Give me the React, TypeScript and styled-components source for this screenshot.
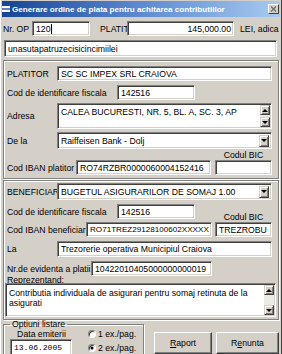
import React from 'react'
import styled, { createGlobalStyle } from 'styled-components'

const GlobalStyle = createGlobalStyle`
  html, body {
    margin: 0;
    padding: 0;
    background: #d4d0c8;
    overflow: hidden;
  }
  * {
    box-sizing: border-box;
  }
`

const Window = styled.div`
  width: 282px;
  height: 362px;
  display: flex;
  flex-direction: column;
  padding: 1px;
  background: #d4d0c8;
  border-left: 1px solid #ffffff;
  border-right: 1px solid #404040;
  font-family: "Liberation Sans", Arial, sans-serif;
  font-size: 8.7px;
  color: #000;
  overflow: hidden;
`

const TitleBar = styled.div`
  height: 16px;
  flex: none;
  display: flex;
  align-items: center;
  padding: 0 1px 0 0;
  background: linear-gradient(90deg, #164496 0%, #5d8ad0 50%, #a6caf0 100%);
  color: #fff;
  font-weight: bold;
  font-size: 8.1px;
`

const TitleText = styled.span`
  flex: 1;
  margin-left: 1px;
  white-space: nowrap;
  overflow: hidden;
`

const CloseBtn = styled.div`
  width: 11px;
  height: 10px;
  flex: none;
  display: flex;
  align-items: center;
  justify-content: center;
  background: #d4d0c8;
  border: 1px solid;
  border-color: #ffffff #404040 #404040 #ffffff;
`

const Content = styled.div`
  display: flex;
  flex-direction: column;
  padding: 4px 1px 0;
`

const Row = styled.div<{ $h: number; $mt?: number; $pad?: boolean }>`
  display: flex;
  align-items: center;
  flex: none;
  height: ${p => p.$h}px;
  margin-top: ${p => p.$mt ?? 0}px;
  padding: ${p => (p.$pad ? '0 6px 0 3px' : '0')};
`

const Label = styled.span<{ $w?: number; $pl?: number }>`
  flex: none;
  width: ${p => (p.$w ? `${p.$w}px` : 'auto')};
  padding-left: ${p => p.$pl ?? 0}px;
  white-space: nowrap;
`

const Field = styled.div<{ $w?: number; $right?: boolean; $mono?: boolean; $ml?: number; $mr?: number; $fs?: number }>`
  height: 100%;
  width: ${p => (p.$w ? `${p.$w}px` : 'auto')};
  flex: ${p => (p.$w ? 'none' : '1')};
  margin-left: ${p => p.$ml ?? 0}px;
  margin-right: ${p => p.$mr ?? 0}px;
  display: flex;
  align-items: center;
  justify-content: ${p => (p.$right ? 'flex-end' : 'flex-start')};
  padding: 0 ${p => (p.$right ? 2 : 3)}px;
  background: #ffffff;
  border: 1px solid;
  border-color: #808080 #ffffff #ffffff #808080;
  box-shadow: inset 1px 1px 0 #404040, inset -1px -1px 0 #d4d0c8;
  font-family: ${p => (p.$mono ? '"Liberation Mono", "Courier New", monospace' : 'inherit')};
  font-size: ${p => (p.$mono ? '8px' : p.$fs ? `${p.$fs}px` : 'inherit')};
  white-space: nowrap;
  overflow: hidden;
`

const Caret = styled.span`
  width: 1px;
  height: 10px;
  background: #000;
`

const Combo = styled(Field)`
  padding-right: 2px;
`

const ComboText = styled.span`
  flex: 1;
  overflow: hidden;
`

const ArrowBtn = styled.div<{ $h?: number }>`
  width: 10px;
  height: ${p => p.$h ?? 12}px;
  flex: none;
  display: flex;
  align-items: center;
  justify-content: center;
  background: #d4d0c8;
  border: 1px solid;
  border-color: #d4d0c8 #404040 #404040 #d4d0c8;
  box-shadow: inset 1px 1px 0 #ffffff, inset -1px -1px 0 #808080;
`

const Arrow = styled.span<{ $up?: boolean }>`
  width: 0;
  height: 0;
  border-left: 3px solid transparent;
  border-right: 3px solid transparent;
  border-top: ${p => (p.$up ? '0' : '3px solid #000')};
  border-bottom: ${p => (p.$up ? '3px solid #000' : '0')};
`

const Memo = styled.div<{ $h: number }>`
  flex: 1;
  height: ${p => p.$h}px;
  display: flex;
  background: #ffffff;
  border: 1px solid;
  border-color: #808080 #ffffff #ffffff #808080;
  box-shadow: inset 1px 1px 0 #404040, inset -1px -1px 0 #d4d0c8;
  padding: 1px;
`

const MemoText = styled.div<{ $pt?: number }>`
  flex: 1;
  padding: ${p => p.$pt ?? 2}px 3px 0 2px;
  line-height: 10px;
  overflow: hidden;
`

const ScrollBar = styled.div`
  width: 10px;
  flex: none;
  display: flex;
  flex-direction: column;
  justify-content: space-between;
  background: #ecebe6;
`

const Panel = styled.div<{ $pt: number; $pb: number; $mt: number }>`
  display: flex;
  flex-direction: column;
  margin-top: ${p => p.$mt}px;
  padding: ${p => p.$pt}px 0 ${p => p.$pb}px;
  border: 1px solid #808080;
  box-shadow: inset 1px 1px 0 #ffffff, 1px 1px 0 #ffffff;
`

const BicLabel = styled.span<{ $self?: boolean }>`
  width: 57px;
  margin-left: auto;
  text-align: center;
  line-height: 10px;
  align-self: ${p => (p.$self ? 'flex-end' : 'auto')};
  margin-bottom: ${p => (p.$self ? '-3px' : '0')};
`

const MemoWrap = styled.div`
  display: flex;
  padding: 0 2px 0 1px;
`

const BottomRow = styled.div`
  display: flex;
  align-items: flex-start;
  margin-top: -1px;
`

const Group = styled.fieldset`
  width: 141px;
  height: 48px;
  margin: 0;
  padding: 0 0 0 6px;
  border: 1px solid #808080;
  box-shadow: inset 1px 1px 0 #ffffff, 1px 1px 0 #ffffff;
  display: flex;
`

const Legend = styled.legend`
  padding: 0 2px;
  margin-left: 0;
  line-height: 10px;
`

const DateCol = styled.div`
  width: 62px;
  display: flex;
  flex-direction: column;
  align-items: stretch;
`

const DateLabel = styled.div`
  height: 10px;
  line-height: 10px;
  text-align: center;
  padding-left: 1px;
`

const DateField = styled(Field)`
  height: 17px;
  flex: none;
`

const RadioCol = styled.div`
  display: flex;
  flex-direction: column;
  margin-left: 16px;
  margin-top: -2px;
`

const RadioRow = styled.label`
  display: flex;
  align-items: center;
  height: 14px;
  gap: 2px;
`

const RadioDot = styled.span`
  width: 8px;
  height: 8px;
  border-radius: 50%;
  background: #ffffff;
  border: 1px solid;
  border-color: #808080 #ffffff #ffffff #808080;
  box-shadow: inset 1px 1px 0 #404040;
  display: flex;
  align-items: center;
  justify-content: center;
`

const RadioMark = styled.span`
  width: 2px;
  height: 2px;
  border-radius: 50%;
  background: #000;
  box-shadow: 0 0 0 0.5px #000;
`

const Button = styled.div<{ $w: number; $ml: number }>`
  width: ${p => p.$w}px;
  height: 22px;
  margin-left: ${p => p.$ml}px;
  margin-top: 13px;
  display: flex;
  align-items: center;
  justify-content: center;
  border: 1px solid;
  border-color: #ffffff #404040 #404040 #ffffff;
  box-shadow: inset -1px -1px 0 #808080;
`

const Hot = styled.span`
  text-decoration: underline;
`

const TitleIcon = () => (
  <svg width="9" height="10" viewBox="0 0 9 10">
    <rect x="0" y="2" width="8" height="2" fill="#ffffff" />
    <rect x="0" y="6" width="8" height="2" fill="#ffffff" />
    <rect x="0" y="4" width="8" height="2" fill="#5a7fc8" />
  </svg>
)

const CloseIcon = () => (
  <svg width="7" height="6" viewBox="0 0 7 6">
    <path d="M1 0.5 L6 5.5 M6 0.5 L1 5.5" stroke="#6e6e6e" strokeWidth="1.2" />
  </svg>
)

const ScrollBox = () => (
  <ScrollBar>
    <ArrowBtn $h={10}><Arrow $up /></ArrowBtn>
    <ArrowBtn $h={10}><Arrow /></ArrowBtn>
  </ScrollBar>
)

const DropDown = ({ text }: { text: string }) => (
  <Combo>
    <ComboText>{text}</ComboText>
    <ArrowBtn><Arrow /></ArrowBtn>
  </Combo>
)

export default function App() {
  return (
    <>
      <GlobalStyle />
      <Window>
        <TitleBar>
          <TitleIcon />
          <TitleText>Generare ordine de plata pentru achitarea contributiilor</TitleText>
          <CloseBtn><CloseIcon /></CloseBtn>
        </TitleBar>

        <Content>
          <Row $h={15}>
            <Label $w={29}>Nr. OP</Label>
            <Field $w={58}>120<Caret /></Field>
            <Label $w={37} $pl={10}>PLATITI</Label>
            <Field $w={107} $right>145,000.00</Field>
            <Label $pl={6}>LEI, adica</Label>
          </Row>
          <Row $h={17} $mt={4}>
            <Field $ml={1} $mr={2}>unasutapatruzecisicincimiilei</Field>
          </Row>

          <Panel $mt={3} $pt={5} $pb={3}>
            <Row $h={15} $pad>
              <Label $w={50}>PLATITOR</Label>
              <Field>SC SC IMPEX SRL CRAIOVA</Field>
            </Row>
            <Row $h={15} $mt={4} $pad>
              <Label $w={110}>Cod de identificare fiscala</Label>
              <Field $w={78}>142516</Field>
            </Row>
            <Row $h={26} $mt={3} $pad>
              <Label $w={50}>Adresa</Label>
              <Memo $h={26}>
                <MemoText>CALEA BUCURESTI, NR. 5, BL. A, SC. 3, AP</MemoText>
                <ScrollBox />
              </Memo>
            </Row>
            <Row $h={17} $mt={3} $pad>
              <Label $w={50}>De la</Label>
              <DropDown text="Raiffeisen Bank - Dolj" />
            </Row>
            <Row $h={10} $mt={1} $pad>
              <BicLabel>Codul BIC</BicLabel>
            </Row>
            <Row $h={15} $pad>
              <Label $w={69}>Cod IBAN platitor</Label>
              <Field $w={135}>RO74RZBR0000060004152416</Field>
              <Field $ml={4} />
            </Row>
          </Panel>

          <Panel $mt={1} $pt={2} $pb={2}>
            <Row $h={17} $pad>
              <Label $w={50}>BENEFICIAR</Label>
              <DropDown text="BUGETUL ASIGURARILOR DE SOMAJ 1.00" />
            </Row>
            <Row $h={15} $mt={4} $pad>
              <Label $w={110}>Cod de identificare fiscala</Label>
              <Field $w={78}>142516</Field>
              <BicLabel $self>Codul BIC</BicLabel>
            </Row>
            <Row $h={15} $mt={3} $pad>
              <Label $w={79}>Cod IBAN beneficiar</Label>
              <Field $w={126} $fs={8.1}>RO71TREZ29128100602XXXXX</Field>
              <Field $ml={3}>TREZROBU</Field>
            </Row>
            <Row $h={16} $mt={4} $pad>
              <Label $w={50}>La</Label>
              <Field>Trezorerie operativa Municipiul Craiova</Field>
            </Row>
            <Row $h={15} $mt={4} $pad>
              <Label $w={84}>Nr.de evidenta a platii</Label>
              <Field $w={121}>10422010405000000000019</Field>
            </Row>
            <Row $h={7} $pad>
              <Label>Reprezentand:</Label>
            </Row>
            <MemoWrap>
              <Memo $h={34}>
                <MemoText $pt={3}>
                  Contributia individuala de asigurari pentru somaj retinuta de la asigurati
                </MemoText>
                <ScrollBox />
              </Memo>
            </MemoWrap>
          </Panel>

          <BottomRow>
            <Group>
              <Legend>Optiuni listare</Legend>
              <DateCol>
                <DateLabel>Data emiterii</DateLabel>
                <DateField $mono>13.06.2005</DateField>
              </DateCol>
              <RadioCol>
                <RadioRow>
                  <RadioDot />
                  <span>1 ex./pag.</span>
                </RadioRow>
                <RadioRow>
                  <RadioDot><RadioMark /></RadioDot>
                  <span>2 ex./pag.</span>
                </RadioRow>
              </RadioCol>
            </Group>
            <Button $w={58} $ml={10}><span><Hot>R</Hot>aport</span></Button>
            <Button $w={63} $ml={4}><span>R<Hot>e</Hot>nunta</span></Button>
          </BottomRow>
        </Content>
      </Window>
    </>
  )
}
